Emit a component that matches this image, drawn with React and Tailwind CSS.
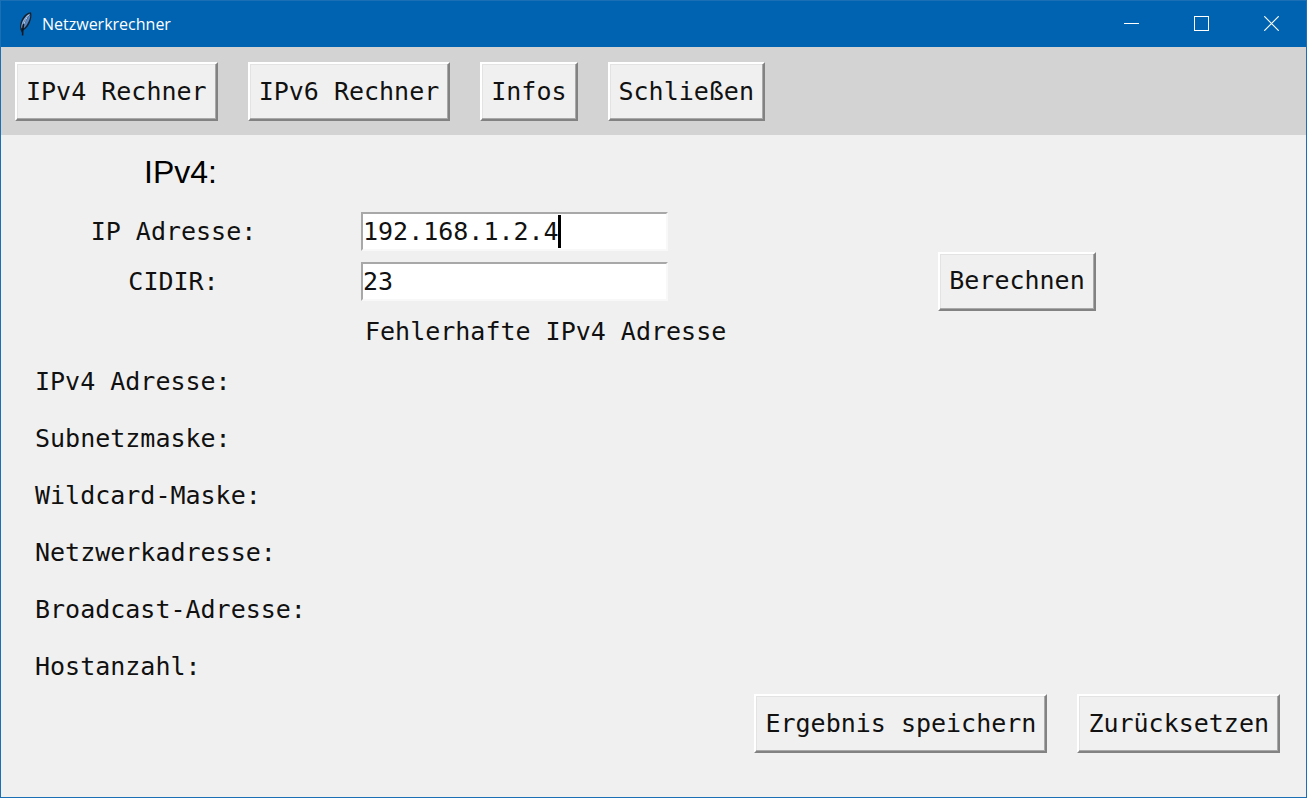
import { useState } from 'react';

const BEVEL =
  'border-2 border-t-white border-l-white border-r-[#828282] border-b-[#828282] shadow-[inset_-1px_-1px_0_#a9a9a9,inset_1px_1px_0_#e3e3e3]';

function TkButton({ children, className = '' }) {
  return (
    <button
      type="button"
      className={`h-[59px] shrink-0 whitespace-nowrap bg-[#f0f0f0] px-[9px] leading-[30px] ${BEVEL} ${className}`}
    >
      {children}
    </button>
  );
}

function Entry({ id, value, onChange, showCaret = false }) {
  return (
    <div className="relative ml-[15px] w-[307px] self-center">
      <input
        id={id}
        type="text"
        value={value}
        onChange={(e) => onChange(e.target.value)}
        className="block h-[39px] w-full border-t-2 border-r-2 border-b-2 border-l-2 border-t-[#a8a8a8] border-r-[#f8f8f8] border-b-[#f8f8f8] border-l-[#a8a8a8] bg-white leading-[30px] caret-transparent outline-none"
      />
      {showCaret && (
        <span
          aria-hidden="true"
          className="absolute top-[3px] h-[33px] w-[3px] bg-black"
          style={{ left: `calc(1px + ${value.length}ch)` }}
        />
      )}
    </div>
  );
}

function FeatherIcon() {
  return (
    <svg viewBox="0 0 16 26" className="h-[26px] w-4" aria-hidden="true">
      <path
        d="M14 1.200 C10.500 1.400 7 4 4.800 8.500 C3.200 12 2.600 15.500 3.600 18.800 L6.200 19.500 C9.500 17.500 12 14.500 13 11 C14.200 8 15 4.500 14 1.200 Z"
        fill="#15202e"
      />
      <path d="M12.800 2.600 C9.500 4 6.600 8 5.200 11.500 C4.200 14 4.200 16 4.700 17.600 C6 12 8.800 7 12.800 2.600 Z" fill="#86b2ea" />
      <path d="M13.200 3.600 C13.600 7 12 10.500 10 13.500 C9 15.200 7.800 16.600 6.500 17.500 C7.200 12.500 9.500 8 13.200 3.600 Z" fill="#5685c4" />
      <path d="M12.500 3.400 C9 7 6.900 12 6 17" stroke="#cfe1f7" strokeWidth=".9" fill="none" />
      <path d="M6.600 13 C5.800 17 5.500 20 5.600 24.500" stroke="#10151c" strokeWidth="1.500" fill="none" />
      <path d="M4.200 18 C4.200 19.500 4.600 20.500 5.400 21.500" stroke="#15202e" strokeWidth="1.200" fill="none" />
    </svg>
  );
}

function TitleBar() {
  return (
    <header className="flex h-[46px] items-center bg-[#0063b1] text-white">
      <div className="flex flex-1 items-center gap-[9px] pl-4">
        <FeatherIcon />
        <h1 className="font-['Open_Sans',sans-serif] text-[16px] leading-6">Netzwerkrechner</h1>
      </div>
      <div className="flex h-full pb-px">
        <button type="button" aria-label="Minimieren" className="flex h-full w-[70px] items-center justify-center">
          <svg viewBox="0 0 15 15" className="size-[15px]" shapeRendering="crispEdges">
            <path d="M0 7.500H15" stroke="white" />
          </svg>
        </button>
        <button type="button" aria-label="Maximieren" className="flex h-full w-[70px] items-center justify-center">
          <svg viewBox="0 0 15 15" className="size-[15px]" shapeRendering="crispEdges">
            <path d="M.5 .5H14.500V14.500H.5Z" fill="none" stroke="white" />
          </svg>
        </button>
        <button type="button" aria-label="Beenden" className="flex h-full w-[70px] items-center justify-center">
          <svg viewBox="0 0 15 15" className="size-[15px]">
            <path d="M.3 .3L14.700 14.700M14.700 .3L.3 14.700" stroke="white" strokeWidth="1.200" />
          </svg>
        </button>
      </div>
    </header>
  );
}

const RESULTS = [
  'IPv4 Adresse:',
  'Subnetzmaske:',
  'Wildcard-Maske:',
  'Netzwerkadresse:',
  'Broadcast-Adresse:',
  'Hostanzahl:',
];

export default function App() {
  const [ip, setIp] = useState('192.168.1.2.4');
  const [cidr, setCidr] = useState('23');

  return (
    <div className="flex min-h-screen flex-col border border-[#1a6fb5] bg-[#f0f0f0] font-['DejaVu_Sans_Mono',monospace] text-[25px] leading-[30px] text-[#111]">
      <TitleBar />
      <nav className="flex gap-[30px] bg-[#d3d3d3] px-[14px] pt-[15px] pb-[14px]">
        <TkButton>IPv4 Rechner</TkButton>
        <TkButton>IPv6 Rechner</TkButton>
        <TkButton>Infos</TkButton>
        <TkButton>Schließen</TkButton>
      </nav>
      <main className="flex flex-col">
        <h2 className="pt-[19px] pb-4 pl-[143px] font-['Liberation_Sans',sans-serif] text-[32px] leading-9 text-black">
          IPv4:
        </h2>
        <form className="grid auto-rows-[50px] grid-cols-[345px_382px_1fr]" onSubmit={(e) => e.preventDefault()}>
          <label htmlFor="ip" className="col-start-1 row-start-1 self-center justify-self-center pt-0.5">
            IP Adresse:
          </label>
          <Entry id="ip" value={ip} onChange={setIp} showCaret />
          <label htmlFor="cidr" className="col-start-1 row-start-2 self-center justify-self-center pt-0.5">
            CIDIR:
          </label>
          <Entry id="cidr" value={cidr} onChange={setCidr} />
          <output htmlFor="ip cidr" className="col-start-2 row-start-3 self-center pt-0.5 pl-[19px] whitespace-nowrap">
            Fehlerhafte IPv4 Adresse
          </output>
          <TkButton className="col-start-3 row-span-3 row-start-1 self-center justify-self-center">Berechnen</TkButton>
        </form>
        <ul className="flex flex-col gap-[27px] pt-[11px] pl-[34px]">
          {RESULTS.map((label) => (
            <li key={label}>{label}</li>
          ))}
        </ul>
        <div className="flex justify-end gap-[30px] pt-3 pr-[26px] pb-6">
          <TkButton>Ergebnis speichern</TkButton>
          <TkButton>Zurücksetzen</TkButton>
        </div>
      </main>
    </div>
  );
}
